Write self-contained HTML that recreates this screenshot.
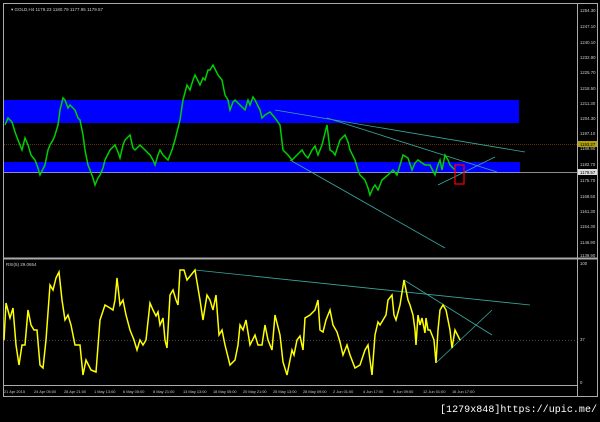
<!DOCTYPE html><html><head><style>body{margin:0;background:#000;width:600px;height:417px;overflow:hidden;font-family:"Liberation Sans",sans-serif}</style></head><body>
<svg width="600" height="417" xmlns="http://www.w3.org/2000/svg" font-family="Liberation Sans" font-size="4.5" fill="#ccc">
<rect width="600" height="417" fill="#000"/>
<rect x="3.5" y="3.5" width="594" height="393" fill="none" stroke="#aaa"/>
<line x1="3" y1="258.5" x2="598" y2="258.5" stroke="#aaa" stroke-width="2"/>
<line x1="577.5" y1="3" x2="577.5" y2="397" stroke="#aaa"/>
<line x1="3" y1="385.5" x2="578" y2="385.5" stroke="#aaa"/>
<rect x="4" y="100" width="515" height="23" fill="#0000ff"/>
<rect x="4" y="162" width="516" height="11" fill="#0000ff"/>
<line x1="4" y1="172.5" x2="578" y2="172.5" stroke="#bbb" stroke-width="0.8"/>
<line x1="4" y1="144.5" x2="578" y2="144.5" stroke="#c06000" stroke-width="0.6" stroke-dasharray="1,1"/>
<g stroke="#3aa8a0" stroke-width="0.8" fill="none">
<line x1="275" y1="110" x2="525" y2="152"/><line x1="327" y1="118" x2="497" y2="172"/>
<line x1="290" y1="160" x2="445" y2="248"/><line x1="438" y1="185" x2="495" y2="157"/>
<line x1="195" y1="270" x2="530" y2="305"/><line x1="404" y1="280" x2="492" y2="335"/><line x1="437" y1="362" x2="492" y2="310"/>
</g>
<polyline fill="none" stroke="#00d000" stroke-width="1.5" points="5,125 8,118 12,122 15,132 18,140 22,150 25,138 28,145 31,155 35,160 38,168 40,175 45,165 48,150 50,145 53,140 55,135 58,125 60,110 63,98 65,100 68,108 70,105 75,110 78,118 80,120 83,135 85,150 88,165 90,170 93,178 95,185 98,178 100,175 103,168 105,160 110,150 115,145 118,152 120,158 123,145 125,140 130,135 133,148 135,150 140,145 145,150 150,155 153,160 155,165 158,155 160,150 163,155 168,160 172,150 175,140 178,128 180,120 183,100 187,85 190,90 193,80 195,75 200,85 203,78 205,80 208,70 210,70 213,65 218,75 222,80 225,95 228,100 230,110 233,102 235,100 240,105 245,110 248,100 250,105 253,97 255,100 260,110 262,118 265,115 270,112 275,118 280,125 283,150 288,155 292,160 297,155 302,150 305,155 308,158 312,150 315,146 318,155 322,145 327,125 330,150 333,152 335,155 340,140 345,135 348,142 350,150 355,160 358,170 360,175 365,180 368,188 370,195 373,188 375,185 378,190 382,180 388,175 393,170 397,175 400,165 403,155 408,158 412,170 415,163 418,160 425,165 430,165 435,175 438,165 440,160 442,170 445,155 448,160 450,165 455,170"/>
<rect x="455" y="165" width="9" height="19" fill="none" stroke="#f00" stroke-width="1.2"/>
<line x1="4" y1="340.5" x2="578" y2="340.5" stroke="#888" stroke-width="0.5" stroke-dasharray="1,2"/>
<polyline fill="none" stroke="#ffff00" stroke-width="1.5" points="4,340 6,303 10,318 13,308 16,345 19,365 22,345 25,345 28,310 31,325 34,330 37,330 40,365 43,368 46,340 50,285 53,290 56,278 59,272 62,300 65,320 68,315 71,325 75,345 80,345 83,375 86,360 91,370 96,372 100,320 105,305 110,308 113,310 115,300 117,278 120,305 123,300 126,315 130,330 134,340 137,350 140,340 143,345 146,340 150,303 153,310 156,316 158,312 160,325 163,318 165,340 167,348 170,295 173,290 176,300 178,305 180,270 184,270 187,280 191,275 195,270 200,300 203,320 207,295 210,300 213,310 216,295 219,335 222,330 225,345 230,365 235,360 238,345 240,325 243,330 246,320 250,345 255,335 258,345 262,345 265,325 268,340 272,350 275,315 280,335 283,362 287,375 292,350 294,355 297,340 300,336 303,350 305,318 310,315 315,310 318,300 320,330 323,332 326,320 330,310 333,325 337,332 340,342 343,355 347,345 350,355 355,368 360,365 365,350 368,345 372,375 375,335 378,322 380,325 383,320 386,315 388,300 392,295 394,315 396,320 400,305 404,280 408,300 410,305 413,315 415,330 416,345 418,315 420,325 422,318 425,333 426,318 428,330 430,330 434,340 436,363 438,330 440,310 443,305 446,310 450,330 452,348 455,330 458,336 460,340"/>
<text x="11" y="11">▾ GOLD,H4  1179.23 1180.79 1177.95 1179.57</text>
<text x="6" y="266">RSI(5) 29.0654</text>
<g font-size="4.3">
<text x="580" y="12">1254.30</text><text x="580" y="28">1247.10</text><text x="580" y="44">1240.10</text><text x="580" y="59">1232.90</text><text x="580" y="74">1225.70</text><text x="580" y="90">1218.50</text><text x="580" y="105">1211.30</text><text x="580" y="120">1204.30</text><text x="580" y="135">1197.10</text><text x="580" y="150">1189.90</text><text x="580" y="166">1182.70</text><text x="580" y="182">1175.70</text><text x="580" y="198">1168.50</text><text x="580" y="213">1161.30</text><text x="580" y="228">1154.30</text><text x="580" y="244">1146.90</text><text x="580" y="257">1139.90</text>
<rect x="578" y="141" width="19" height="6" fill="#b0a000"/><text x="580" y="146" fill="#000">1193.27</text>
<rect x="578" y="169" width="19" height="6" fill="#ddd"/><text x="580" y="174" fill="#000">1179.57</text>
<text x="580" y="265">100</text><text x="580" y="341">37</text><text x="580" y="384">0</text>
</g>
<g font-size="3.9">
<text x="4" y="393">21 Apr 2015</text><text x="34" y="393">24 Apr 05:00</text><text x="64" y="393">28 Apr 21:00</text><text x="94" y="393">1 May 13:00</text><text x="123" y="393">6 May 05:00</text><text x="153" y="393">8 May 21:00</text><text x="183" y="393">13 May 13:00</text><text x="213" y="393">18 May 05:00</text><text x="243" y="393">20 May 21:00</text><text x="273" y="393">25 May 13:00</text><text x="303" y="393">28 May 09:00</text><text x="333" y="393">2 Jun 01:00</text><text x="363" y="393">4 Jun 17:00</text><text x="393" y="393">9 Jun 09:00</text><text x="423" y="393">12 Jun 01:00</text><text x="452" y="393">16 Jun 17:00</text>
</g>
<text x="440" y="412" font-family="Liberation Mono" font-size="10" fill="#fff" textLength="157">[1279x848]https://upic.me/</text>
</svg></body></html>
